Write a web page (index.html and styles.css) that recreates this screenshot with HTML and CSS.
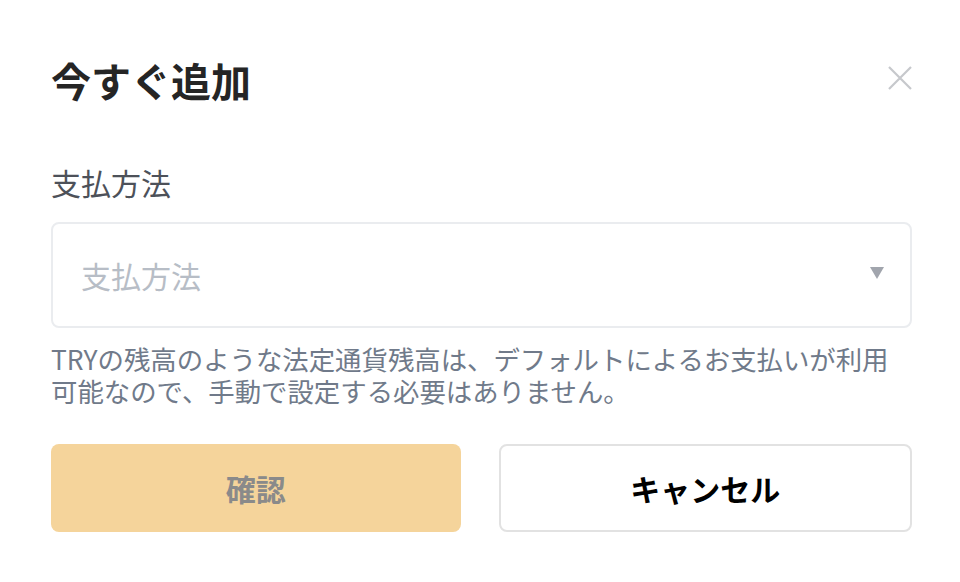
FILE: index.html
```html
<!DOCTYPE html>
<html lang="ja">
<head>
<meta charset="utf-8">
<link rel="stylesheet" href="styles.css">
</head>
<body>
<div class="modal">
  <div class="header">
    <h1 class="title">今すぐ追加</h1>
    <button class="close" aria-label="close">
      <svg width="24" height="24" viewBox="0 0 24 24"><path d="M1 1L23 23M23 1L1 23" stroke="#c6c8cc" stroke-width="2.2" fill="none"/></svg>
    </button>
  </div>
  <div class="label">支払方法</div>
  <div class="select">
    <span class="placeholder">支払方法</span>
    <svg class="caret" width="14" height="12" viewBox="0 0 14 12"><path d="M0 0H14L7 12Z" fill="#a1a5ad"/></svg>
  </div>
  <p class="help">TRYの残高のような法定通貨残高は、デフォルトによるお支払いが利用可能なので、手動で設定する必要はありません。</p>
  <div class="actions">
    <button class="btn btn-confirm">確認</button>
    <button class="btn btn-cancel">キャンセル</button>
  </div>
</div>
</body>
</html>
```
FILE: styles.css
```css
* { box-sizing: border-box; }
html, body { margin: 0; padding: 0; background: #fff; }
body {
  font-family: "Noto Sans CJK JP", "Noto Sans", sans-serif;
  width: 960px;
  height: 582px;
  overflow: hidden;
}
.modal {
  padding: 40px 48px 0 51px;
  display: flex;
  flex-direction: column;
}
.header {
  height: 80px;
  display: flex;
  align-items: center;
  justify-content: space-between;
}
.title {
  margin: 0;
  font-size: 40px;
  font-weight: 700;
  color: #252525;
  line-height: 1;
}
.close {
  border: 0;
  background: none;
  padding: 0;
  width: 24px;
  height: 24px;
  margin-top: -4px;
  display: flex;
}
.label {
  margin-top: 40px;
  font-size: 30px;
  line-height: 44px;
  color: #4d5159;
}
.select {
  margin-top: 18px;
  height: 106px;
  border: 2px solid #eaecef;
  border-radius: 8px;
  display: flex;
  align-items: center;
  justify-content: space-between;
  padding: 0 26px 0 28px;
}
.placeholder {
  font-size: 30px;
  color: #b7bdc6;
  line-height: 1;
}
.caret { margin-top: -4px; }
.help {
  margin: 15px 0 0;
  font-size: 26.4px;
  line-height: 32px;
  color: #707a8a;
  padding-right: 20px;
}
.actions {
  margin-top: 37px;
  display: flex;
  gap: 38px;
}
.btn {
  flex: 1;
  height: 88px;
  border-radius: 8px;
  font-family: inherit;
  font-size: 30px;
  font-weight: 700;
  display: flex;
  align-items: center;
  justify-content: center;
  padding: 0;
}
.btn-confirm {
  background: #f5d49b;
  border: 0;
  color: #8a8a8a;
}
.btn-cancel {
  background: #fff;
  border: 2px solid #e2e2e2;
  color: #000;
}
```
